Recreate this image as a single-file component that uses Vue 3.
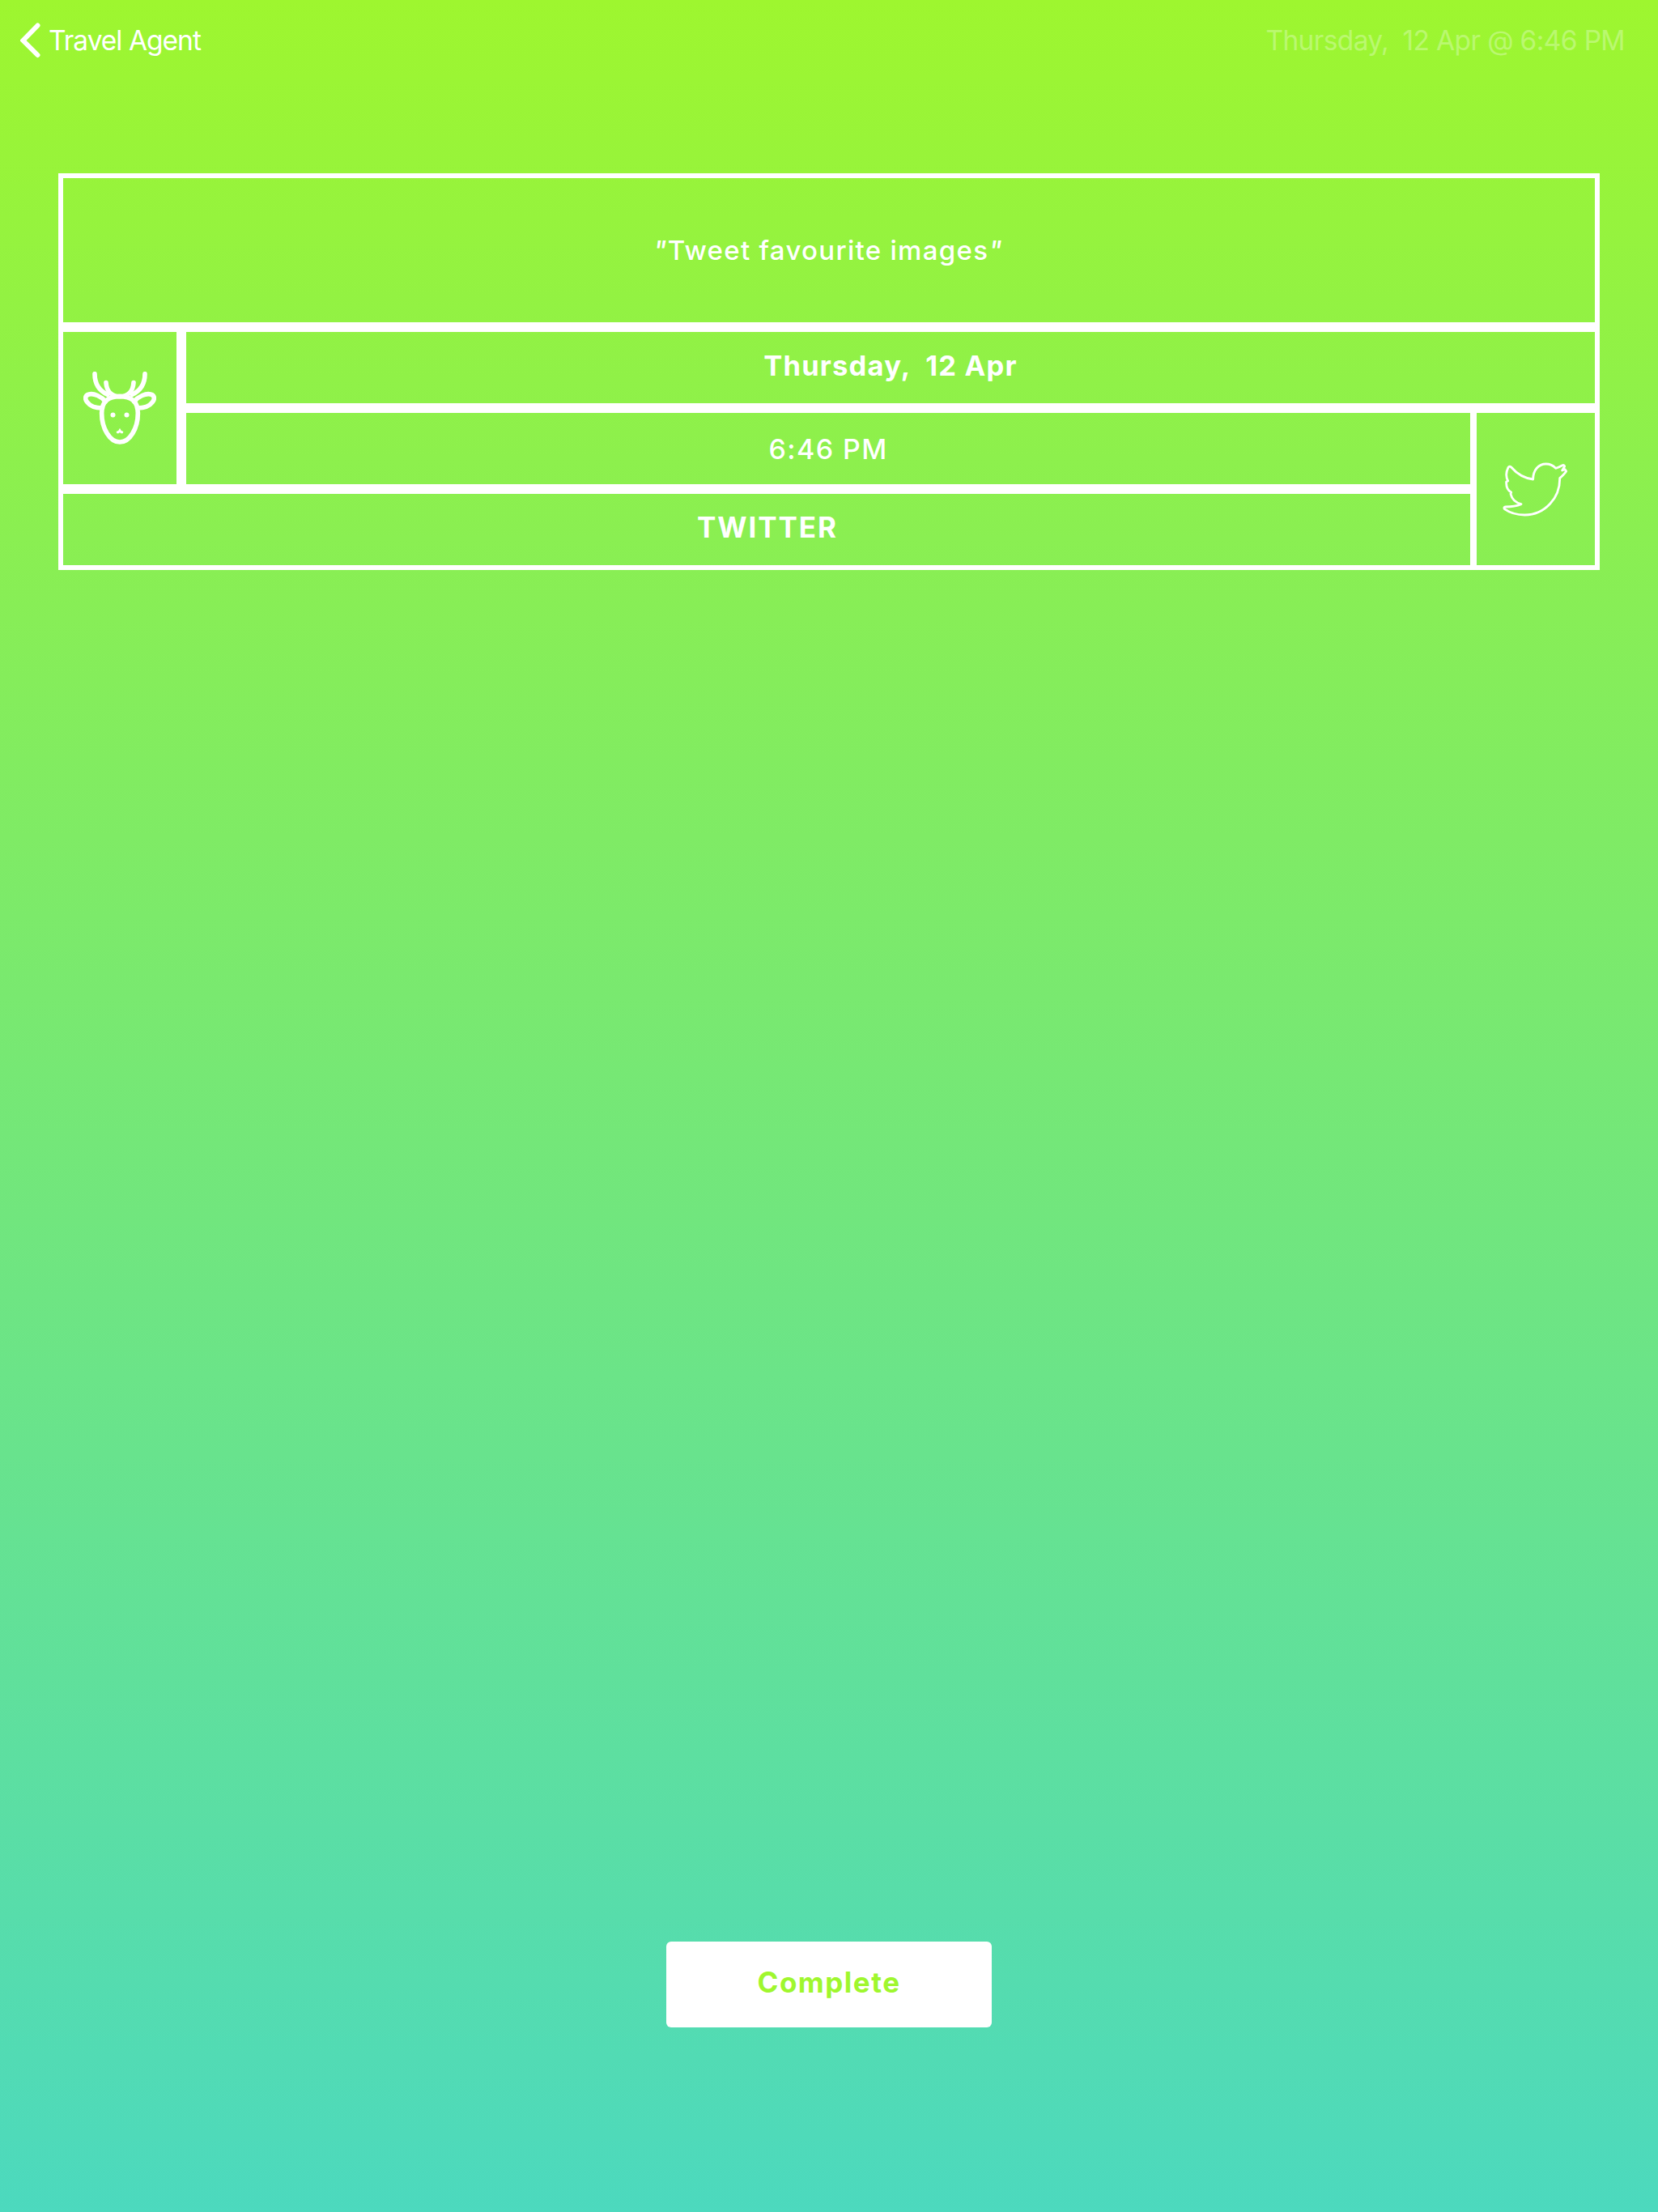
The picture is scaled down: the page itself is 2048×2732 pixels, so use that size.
<script setup>
const event = {
  title: 'Tweet favourite images',
  day: 'Thursday,  12 Apr',
  time: '6:46 PM',
  service: 'TWITTER',
}
</script>

<template>
  <main class="screen">
    <header class="nav">
      <button class="back">
        <svg class="chevron" width="26" height="44" viewBox="0 0 26 44">
          <path d="M21.500 3.500 L3.500 22 L21.500 40" />
        </svg>
        <span class="back-label">Travel Agent</span>
      </button>
      <span class="stamp">{{ event.day }} @ {{ event.time }}</span>
    </header>

    <section class="card">
      <div class="cell title"><span class="t-title"><i>"</i>{{ event.title }}<i>"</i></span></div>
      <div class="cell avatar">
        <svg width="90" height="90" viewBox="129 207 270 270">
          <path d="M264 299 C222 299 197 316 197 362 C197 415 226 468 264 468 C302 468 331 415 331 362 C331 316 306 299 264 299 Z" />
          <path d="M171 215 C171 247 184 276 219 292" />
          <path d="M357 215 C357 247 344 276 309 292" />
          <path d="M213 248 C215 278 232 299 264 299 C296 299 313 278 315 248" />
          <path d="M211 318 C195 298 168 287 150 291 C134 295 134 308 143 320 C154 335 176 342 199 342" />
          <path d="M317 318 C333 298 360 287 378 291 C394 295 394 308 385 320 C374 335 352 342 329 342" />
          <circle class="solid" cx="238.500" cy="367.500" r="9" />
          <circle class="solid" cx="289.500" cy="367.500" r="9" />
          <path class="solid" d="M264 416 L269 425 L277 429 L275 436 L268 436 L264 432 L260 436 L253 436 L251 429 L259 425 Z" />
        </svg>
      </div>
      <div class="cell day"><span class="t-day">{{ event.day }}</span></div>
      <div class="cell time"><span class="t-time">{{ event.time }}</span></div>
      <div class="cell service"><span class="t-service">{{ event.service }}</span></div>
      <div class="cell network">
        <svg width="80" height="67" viewBox="168 271 240 201">
          <path class="thin" d="M281 334 C249 330 219 311 200 289 Q194 283 189 290 C181 306 180 325 188 340 L182 343 C181 360 187 375 200 382 L198 388 C202 406 216 420 237 426 C221 433 199 436 179 436 Q171 437 175 444 C196 459 223 466 250 466 C326 466 381 402 380 330 C390 321 398 313 404 304 L399 297 L389 301 L398 286 Q396 279 388 283 C381 287 373 291 365 293 C355 282 343 277 329 277 C301 277 281 300 281 334 Z" />
        </svg>
      </div>
    </section>

    <button class="complete"><span class="t-complete">Complete</span></button>
  </main>
</template>

<style>
body { margin: 0; }
</style>

<style scoped>
.screen {
  box-sizing: border-box;
  display: flex;
  flex-direction: column;
  align-items: center;
  width: 2048px;
  height: 2732px;
  padding-bottom: 228px;
  background: linear-gradient(#9ef62f, #4cd9be);
  color: #fff;
  font-family: Inter, "Liberation Sans", sans-serif;
}
button {
  margin: 0;
  padding: 0;
  border: 0;
  background: none;
  color: inherit;
  font: inherit;
}
span { white-space: pre; }
.nav {
  box-sizing: border-box;
  display: flex;
  align-items: center;
  justify-content: space-between;
  width: 100%;
  height: 100px;
  padding: 0 41px 0 25px;
  font-size: 33.5px;
}
.back {
  display: flex;
  align-items: center;
  gap: 9px;
}
.chevron path {
  fill: none;
  stroke: #fff;
  stroke-width: 6;
  stroke-linecap: round;
  stroke-linejoin: miter;
}
.back-label, .stamp { font-weight: 400; }
.back-label { letter-spacing: -1px; }
.stamp { opacity: 0.3; letter-spacing: -0.65px; }
.card {
  display: grid;
  grid-template-columns: 152px 1598px 154px;
  grid-template-rows: 190px 100px 100px 100px;
  margin-top: 114px;
}
.cell {
  display: flex;
  align-items: center;
  justify-content: center;
  border: 6px solid #fff;
}
.title { grid-area: 1 / 1 / 2 / 4; padding-right: 2px; }
.avatar { grid-area: 2 / 1 / 4 / 2; }
.day { grid-area: 2 / 2 / 3 / 4; padding-bottom: 6px; }
.time { grid-area: 3 / 2 / 4 / 3; }
.service { grid-area: 4 / 1 / 5 / 3; padding-bottom: 6px; padding-left: 2px; }
.network { grid-area: 3 / 3 / 5 / 4; margin-left: -4px; padding-right: 2px; }
.cell svg path {
  fill: none;
  stroke: #fff;
  stroke-width: 17;
  stroke-linecap: round;
}
.cell svg path.thin { stroke-width: 8.5; stroke-linejoin: round; }
.cell svg .solid { fill: #fff; stroke: none; }
.t-title { font-size: 33px; font-weight: 500; letter-spacing: 1.3px; }
.t-day { font-size: 34.5px; font-weight: 700; letter-spacing: 1.2px; }
.t-time { font-size: 34px; font-weight: 500; letter-spacing: 1.4px; }
.t-service { font-size: 35px; font-weight: 700; letter-spacing: 1.9px; }
.complete {
  display: flex;
  align-items: center;
  justify-content: center;
  width: 402px;
  height: 106px;
  padding-bottom: 6px;
  box-sizing: border-box;
  margin-top: auto;
  border-radius: 6px;
  background: #fff;
  color: #9ff72e;
}
.t-complete { font-size: 35px; font-weight: 700; letter-spacing: 1.5px; }
</style>
